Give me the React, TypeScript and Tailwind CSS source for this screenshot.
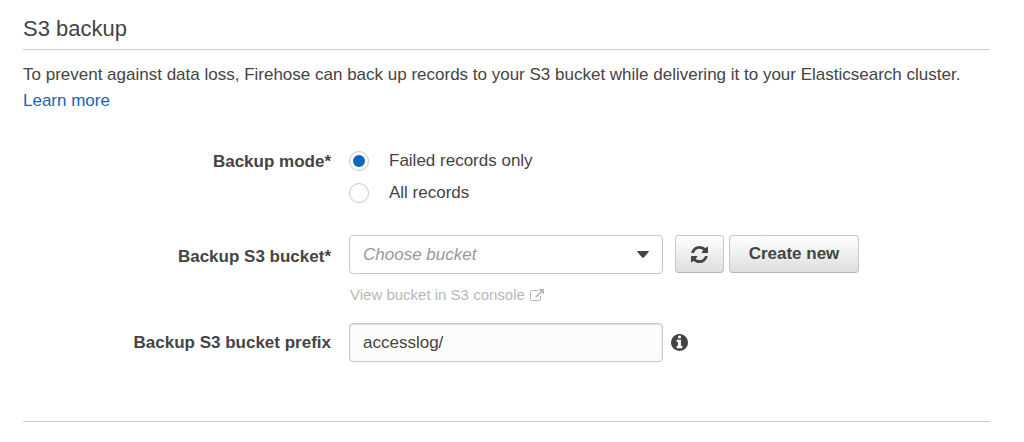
import { useState } from "react";

type BackupMode = "failed" | "all";

const modes: { value: BackupMode; label: string }[] = [
  { value: "failed", label: "Failed records only" },
  { value: "all", label: "All records" },
];

const RefreshIcon = () => (
  <svg viewBox="0 128 1536 1536" className="size-[17px]" fill="currentColor" aria-hidden="true">
    <path d="M1511 1056q0 5-1 7-64 268-268 434.5t-478 166.5q-146 0-282.5-55t-243.5-157l-129 129q-19 19-45 19t-45-19-19-45v-448q0-26 19-45t45-19h448q26 0 45 19t19 45-19 45l-137 137q71 66 161 102t187 36q134 0 250-65t186-179q11-17 53-117 8-23 30-23h192q13 0 22.5 9.5t9.5 22.5zm25-800v448q0 26-19 45t-45 19h-448q-26 0-45-19t-19-45 19-45l138-138q-148-137-349-137-134 0-250 65t-186 179q-11 17-53 117-8 23-30 23h-199q-13 0-22.5-9.5t-9.5-22.5v-7q65-268 270-434.5t480-166.5q146 0 284 55.5t245 156.5l130-129q19-19 45-19t45 19 19 45z" />
  </svg>
);

const ExternalLinkIcon = () => (
  <svg viewBox="0 0 1792 1536" className="h-3 w-[14px]" fill="currentColor" aria-hidden="true">
    <path d="M1408 928v320q0 119-84.5 203.5t-203.5 84.5h-832q-119 0-203.5-84.5t-84.5-203.5v-832q0-119 84.5-203.5t203.5-84.5h704q14 0 23 9t9 23v64q0 14-9 23t-23 9h-704q-66 0-113 47t-47 113v832q0 66 47 113t113 47h832q66 0 113-47t47-113v-320q0-14 9-23t23-9h64q14 0 23 9t9 23zm384-864v512q0 26-19 45t-45 19-45-19l-176-176-652 652q-10 10-23 10t-23-10l-114-114q-10-10-10-23t10-23l652-652-176-176q-19-19-19-45t19-45 45-19h512q26 0 45 19t19 45z" />
  </svg>
);

const InfoIcon = () => (
  <svg viewBox="0 128 1536 1536" className="size-[17px]" fill="currentColor" aria-hidden="true">
    <path d="M1024 1376v-160q0-14-9-23t-23-9h-96v-512q0-14-9-23t-23-9h-320q-14 0-23 9t-9 23v160q0 14 9 23t23 9h96v320h-96q-14 0-23 9t-9 23v160q0 14 9 23t23 9h448q14 0 23-9t9-23zm-128-896v-160q0-14-9-23t-23-9h-192q-14 0-23 9t-9 23v160q0 14 9 23t23 9h192q14 0 23-9t9-23zm640 416q0 209-103 385.5t-279.5 279.5-385.5 103-385.5-103-279.5-279.5-103-385.5 103-385.5 279.5-279.5 385.5-103 385.5 103 279.5 279.5 103 385.5z" />
  </svg>
);

const buttonClass =
  "flex h-[38px] items-center justify-center rounded border border-[#c8c8c8] border-b-[#b4b4b4] bg-linear-to-b from-white to-[#dedede] font-bold";

export default function App() {
  const [mode, setMode] = useState<BackupMode>("failed");
  const [bucket, setBucket] = useState("");
  const [prefix, setPrefix] = useState("accesslog/");

  return (
    <main className="bg-white pt-4 pr-[34px] pb-5 pl-[23px] font-['Liberation_Sans',Arial,sans-serif] text-[17px] leading-[26px] text-[#444]">
      <h1 className="border-b border-[#ccc] pb-[7px] text-[22px]">S3 backup</h1>
      <p className="mt-3">
        To prevent against data loss, Firehose can back up records to your S3
        bucket while delivering it to your Elasticsearch cluster.{" "}
        <a href="#" className="text-[#1166bb] hover:underline">
          Learn more
        </a>
      </p>

      <form
        className="mt-[34px] grid grid-cols-[308px_minmax(0,1fr)] gap-x-[18px] border-b border-[#ccc] pb-[59px]"
        onSubmit={(e) => e.preventDefault()}
      >
        <div id="mode-label" className="pt-[1px] text-right font-bold">
          Backup mode*
        </div>
        <div role="radiogroup" aria-labelledby="mode-label" className="flex flex-col gap-[6px]">
          {modes.map(({ value, label }) => (
            <label key={value} className="flex items-center gap-5">
              <input
                type="radio"
                name="mode"
                value={value}
                checked={mode === value}
                onChange={() => setMode(value)}
                className="size-5 appearance-none rounded-full border border-[#c8c8c8] bg-white bg-clip-content p-[3px] checked:bg-[#1166bb]"
              />
              {label}
            </label>
          ))}
        </div>

        <label htmlFor="bucket" className="mt-[29px] pt-[9px] text-right font-bold">
          Backup S3 bucket*
        </label>
        <div className="mt-[29px]">
          <div className="flex items-start">
            <div className="relative w-[314px]">
              <select
                id="bucket"
                value={bucket}
                onChange={(e) => setBucket(e.target.value)}
                className="block h-[39px] w-full appearance-none rounded border border-[#c8c8c8] bg-white px-[13px] text-[#999] italic"
              >
                <option value="">Choose bucket</option>
              </select>
              <svg
                viewBox="0 0 12 7"
                className="pointer-events-none absolute top-4 right-[14px] h-[7px] w-3"
                fill="currentColor"
                aria-hidden="true"
              >
                <path d="M0 .6Q0 0 .8 0H11.2Q12 0 12 .6L6.8 6.6Q6 7.2 5.2 6.6Z" />
              </svg>
            </div>
            <button type="button" aria-label="Refresh buckets" className={`${buttonClass} ml-3 w-[49px]`}>
              <RefreshIcon />
            </button>
            <button type="button" className={`${buttonClass} ml-[5px] w-[130px]`}>
              Create new
            </button>
          </div>
          <a
            href="#"
            className="mt-2 ml-[1px] inline-flex items-center gap-[5px] text-[15px] text-[#b8b8b8]"
          >
            View bucket in S3 console
            <ExternalLinkIcon />
          </a>
        </div>

        <label htmlFor="prefix" className="mt-[15px] pt-[7px] text-right font-bold">
          Backup S3 bucket prefix
        </label>
        <div className="mt-[15px] flex items-center gap-2">
          <input
            id="prefix"
            type="text"
            value={prefix}
            onChange={(e) => setPrefix(e.target.value)}
            className="h-[39px] w-[314px] rounded border border-[#c8c8c8] bg-[#fcfcfc] px-[13px] shadow-[inset_0_1px_2px_#ddd]"
          />
          <button type="button" aria-label="About the bucket prefix">
            <InfoIcon />
          </button>
        </div>
      </form>
    </main>
  );
}
